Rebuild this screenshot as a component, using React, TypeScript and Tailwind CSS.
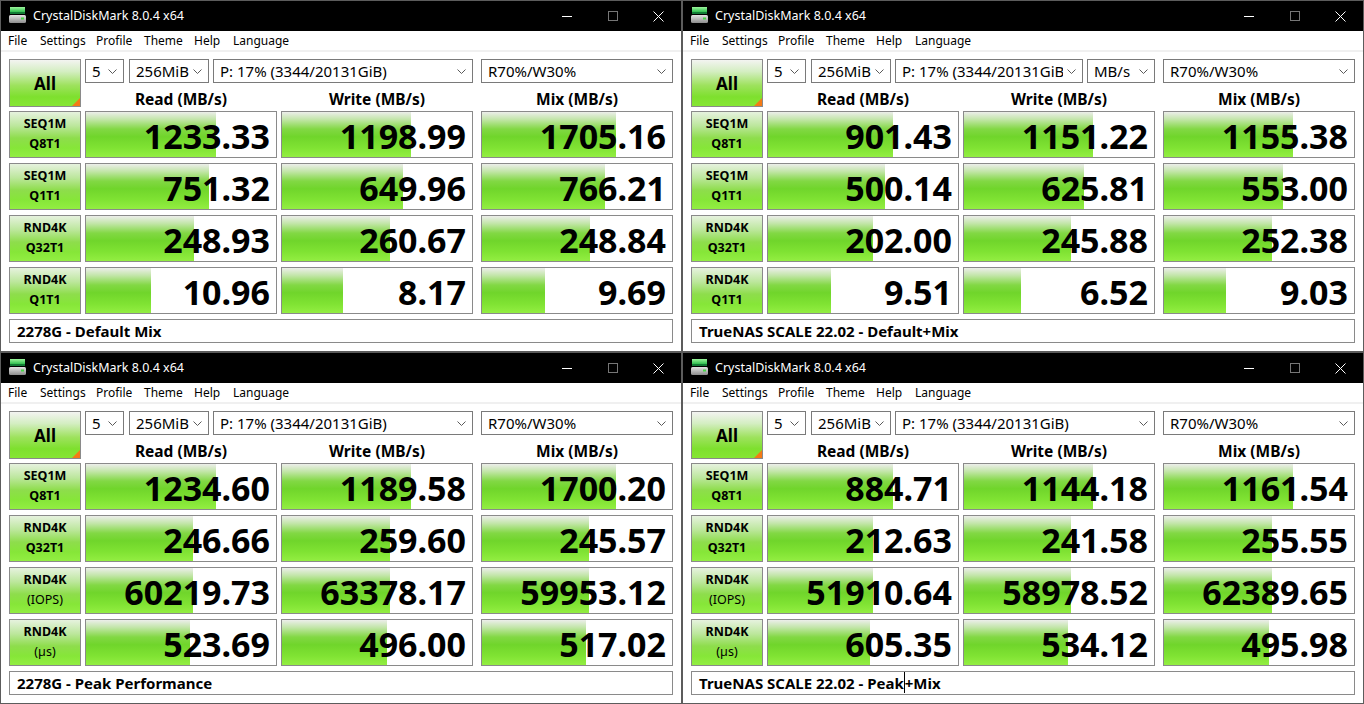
import React from 'react';

type Kind = 'mb' | 'iops' | 'us';

interface Row {
  l1: string;
  l2: string;
  kind: Kind;
  vals: string[];
}

interface WinData {
  rows: Row[];
  comment: React.ReactNode;
  unitBox?: boolean;
}

const fillOf = (v: number, k: Kind) => {
  let f = 0;
  if (k === 'mb') f = Math.log10(v * 10) / 6;
  else if (k === 'iops') f = Math.log10(((v * 4096) / 1e6) * 10) / 6;
  else f = 1 - Math.log10(v) / 6;
  return Math.max(0, Math.min(1, f));
};

const seqRows = (v: string[][]): Row[] => [
  { l1: 'SEQ1M', l2: 'Q8T1', kind: 'mb', vals: v[0] },
  { l1: 'SEQ1M', l2: 'Q1T1', kind: 'mb', vals: v[1] },
  { l1: 'RND4K', l2: 'Q32T1', kind: 'mb', vals: v[2] },
  { l1: 'RND4K', l2: 'Q1T1', kind: 'mb', vals: v[3] },
];

const peakRows = (v: string[][]): Row[] => [
  { l1: 'SEQ1M', l2: 'Q8T1', kind: 'mb', vals: v[0] },
  { l1: 'RND4K', l2: 'Q32T1', kind: 'mb', vals: v[1] },
  { l1: 'RND4K', l2: '(IOPS)', kind: 'iops', vals: v[2] },
  { l1: 'RND4K', l2: '(\u00b5s)', kind: 'us', vals: v[3] },
];

const windows: WinData[] = [
  {
    rows: seqRows([
      ['1233.33', '1198.99', '1705.16'],
      ['751.32', '649.96', '766.21'],
      ['248.93', '260.67', '248.84'],
      ['10.96', '8.17', '9.69'],
    ]),
    comment: '2278G - Default Mix',
  },
  {
    rows: seqRows([
      ['901.43', '1151.22', '1155.38'],
      ['500.14', '625.81', '553.00'],
      ['202.00', '245.88', '252.38'],
      ['9.51', '6.52', '9.03'],
    ]),
    comment: 'TrueNAS SCALE 22.02 - Default+Mix',
    unitBox: true,
  },
  {
    rows: peakRows([
      ['1234.60', '1189.58', '1700.20'],
      ['246.66', '259.60', '245.57'],
      ['60219.73', '63378.17', '59953.12'],
      ['523.69', '496.00', '517.02'],
    ]),
    comment: '2278G - Peak Performance',
  },
  {
    rows: peakRows([
      ['884.71', '1144.18', '1161.54'],
      ['212.63', '241.58', '255.55'],
      ['51910.64', '58978.52', '62389.65'],
      ['605.35', '534.12', '495.98'],
    ]),
    comment: (
      <>
        TrueNAS SCALE 22.02 - Peak
        <span className="inline-block w-px h-[21px] bg-black align-middle -mt-[2px]" />
        +Mix
      </>
    ),
  },
];

const DiskIcon = () => (
  <svg width="17" height="17" viewBox="0 0 17 17">
    <defs>
      <linearGradient id="cdmTop" x1="0" y1="0" x2="0" y2="1">
        <stop offset="0" stopColor="#9cf59c" />
        <stop offset="1" stopColor="#2fbf4f" />
      </linearGradient>
      <linearGradient id="cdmBody" x1="0" y1="0" x2="0" y2="1">
        <stop offset="0" stopColor="#e4e4e4" />
        <stop offset="1" stopColor="#8c8c8c" />
      </linearGradient>
    </defs>
    <rect x="1" y="0" width="15" height="5" fill="url(#cdmTop)" />
    <rect x="1" y="5" width="15" height="2" fill="#137c36" />
    <rect x="0" y="8" width="17" height="8" rx="1.5" fill="url(#cdmBody)" />
    <rect x="12" y="10.5" width="3" height="2" fill="#45d845" />
  </svg>
);

const Chevron = () => (
  <svg width="9" height="5" viewBox="0 0 9 5" className="shrink-0 ml-[4px]">
    <path d="M0.5 0.5 L4.5 4.5 L8.5 0.5" fill="none" stroke="#5a5a5a" strokeWidth="1" />
  </svg>
);

const Combo: React.FC<{ text: string; className: string }> = ({ text, className }) => (
  <div
    className={`h-[24px] border border-[#7a7a7a] bg-white flex items-center pl-[6px] pr-[6px] ${className}`}
  >
    <span className="flex-1 min-w-0 overflow-hidden whitespace-nowrap text-[15px] leading-[20px] text-black">
      {text}
    </span>
    <Chevron />
  </div>
);

const barBg =
  'bg-[linear-gradient(180deg,#eceeea_0%,#c4e6ab_16%,#82d844_38%,#70d52b_55%,#80e333_80%,#93ee42_100%)]';
const labelBg =
  'bg-[linear-gradient(180deg,#e6f2de_0%,#bde79e_30%,#8edd4c_58%,#86e638_80%,#92ee42_100%)]';

const ValueCell: React.FC<{ v: string; kind: Kind; className: string }> = ({ v, kind, className }) => (
  <div className={`relative h-[47px] border border-[#8a8a8a] bg-white overflow-hidden ${className}`}>
    <div
      className={`absolute left-0 top-0 bottom-0 ${barBg}`}
      style={{ width: `${fillOf(parseFloat(v), kind) * 100}%` }}
    />
    <div className="relative h-full flex items-center justify-end pr-[6px] pt-[3px] text-[34px] font-bold leading-none text-black">
      {v}
    </div>
  </div>
);

const Window: React.FC<{ d: WinData }> = ({ d }) => (
  <div className="w-[682px] h-[352px] border border-[#5c5c5c] bg-white flex flex-col overflow-hidden">
    {/* title bar */}
    <div className="h-[30px] bg-black flex items-center shrink-0">
      <div className="ml-[8px] -mt-[1px]">
        <DiskIcon />
      </div>
      <span className="ml-[7px] text-[12.5px] text-white leading-none">CrystalDiskMark 8.0.4 x64</span>
      <div className="ml-auto flex h-full">
        <div className="w-[46px] h-full flex items-center justify-center">
          <div className="w-[10px] h-px bg-white" />
        </div>
        <div className="w-[46px] h-full flex items-center justify-center">
          <div className="w-[10px] h-[10px] border border-[#767676]" />
        </div>
        <div className="w-[45px] h-full flex items-center justify-center">
          <svg width="11" height="11" viewBox="0 0 11 11">
            <path d="M0.5 0.5 L10.5 10.5 M10.5 0.5 L0.5 10.5" stroke="#fff" strokeWidth="1" />
          </svg>
        </div>
      </div>
    </div>
    {/* menu */}
    <div className="h-[19px] flex items-center pl-[7px] text-[12px] leading-none text-black shrink-0">
      <span className="w-[32px]">File</span>
      <span className="w-[56px]">Settings</span>
      <span className="w-[48px]">Profile</span>
      <span className="w-[50px]">Theme</span>
      <span className="w-[39px]">Help</span>
      <span>Language</span>
    </div>
    <div className="h-[2px] bg-[#f0f0f0] shrink-0" />
    {/* content */}
    <div className="pt-[7px] pl-[8px] flex flex-col">
      <div className="flex h-[52px]">
        <div className="w-[72px] h-[48px] border border-[#8a8a8a] relative flex items-center justify-center bg-[linear-gradient(180deg,#f3f4f1_0%,#d4eec2_25%,#9ee25e_55%,#7ee02e_80%,#86e634_100%)]">
          <span className="text-[17px] font-bold leading-none text-black">All</span>
          <div className="absolute right-0 bottom-0 w-0 h-0 border-l-[8px] border-l-transparent border-b-[8px] border-b-[#f47a16]" />
        </div>
        <div className="ml-[4px] flex flex-col">
          <div className="flex h-[24px]">
            <Combo text="5" className="w-[39px]" />
            <Combo text="256MiB" className="w-[80px] ml-[5px]" />
            {d.unitBox ? (
              <>
                <Combo text="P: 17% (3344/20131GiB)" className="w-[188px] ml-[4px]" />
                <Combo text="MB/s" className="w-[68px] ml-[4px]" />
              </>
            ) : (
              <Combo text="P: 17% (3344/20131GiB)" className="w-[260px] ml-[4px]" />
            )}
            <Combo text="R70%/W30%" className="w-[192px] ml-[8px]" />
          </div>
          <div className="flex h-[28px] items-end pb-[4px] text-[15.5px] font-bold leading-none text-black">
            <div className="w-[192px] text-center">Read (MB/s)</div>
            <div className="w-[192px] ml-[4px] text-center">Write (MB/s)</div>
            <div className="w-[192px] ml-[8px] text-center">Mix (MB/s)</div>
          </div>
        </div>
      </div>
      <div className="flex flex-col gap-[5px]">
        {d.rows.map((r, i) => (
          <div key={i} className="flex">
            <div
              className={`w-[72px] h-[47px] border border-[#8a8a8a] flex flex-col items-center justify-center text-[12.5px] leading-[20px] text-black ${labelBg}`}
            >
              <span className="font-bold -mt-[1px]">{r.l1}</span>
              <span className={r.l2.startsWith('(') ? '' : 'font-bold'}>{r.l2}</span>
            </div>
            <ValueCell v={r.vals[0]} kind={r.kind} className="w-[192px] ml-[4px]" />
            <ValueCell v={r.vals[1]} kind={r.kind} className="w-[192px] ml-[4px]" />
            <ValueCell v={r.vals[2]} kind={r.kind} className="w-[192px] ml-[8px]" />
          </div>
        ))}
        <div className="w-[664px] h-[24px] border border-[#8a8a8a] bg-white flex items-center pl-[7px] text-[15px] font-bold leading-none text-black whitespace-nowrap">
          {d.comment}
        </div>
      </div>
    </div>
  </div>
);

export default function App() {
  return (
    <div className="w-[1364px] h-[704px] grid grid-cols-[682px_682px] grid-rows-[352px_352px] bg-white font-['Noto_Sans',sans-serif]">
      {windows.map((w, i) => (
        <Window key={i} d={w} />
      ))}
    </div>
  );
}
